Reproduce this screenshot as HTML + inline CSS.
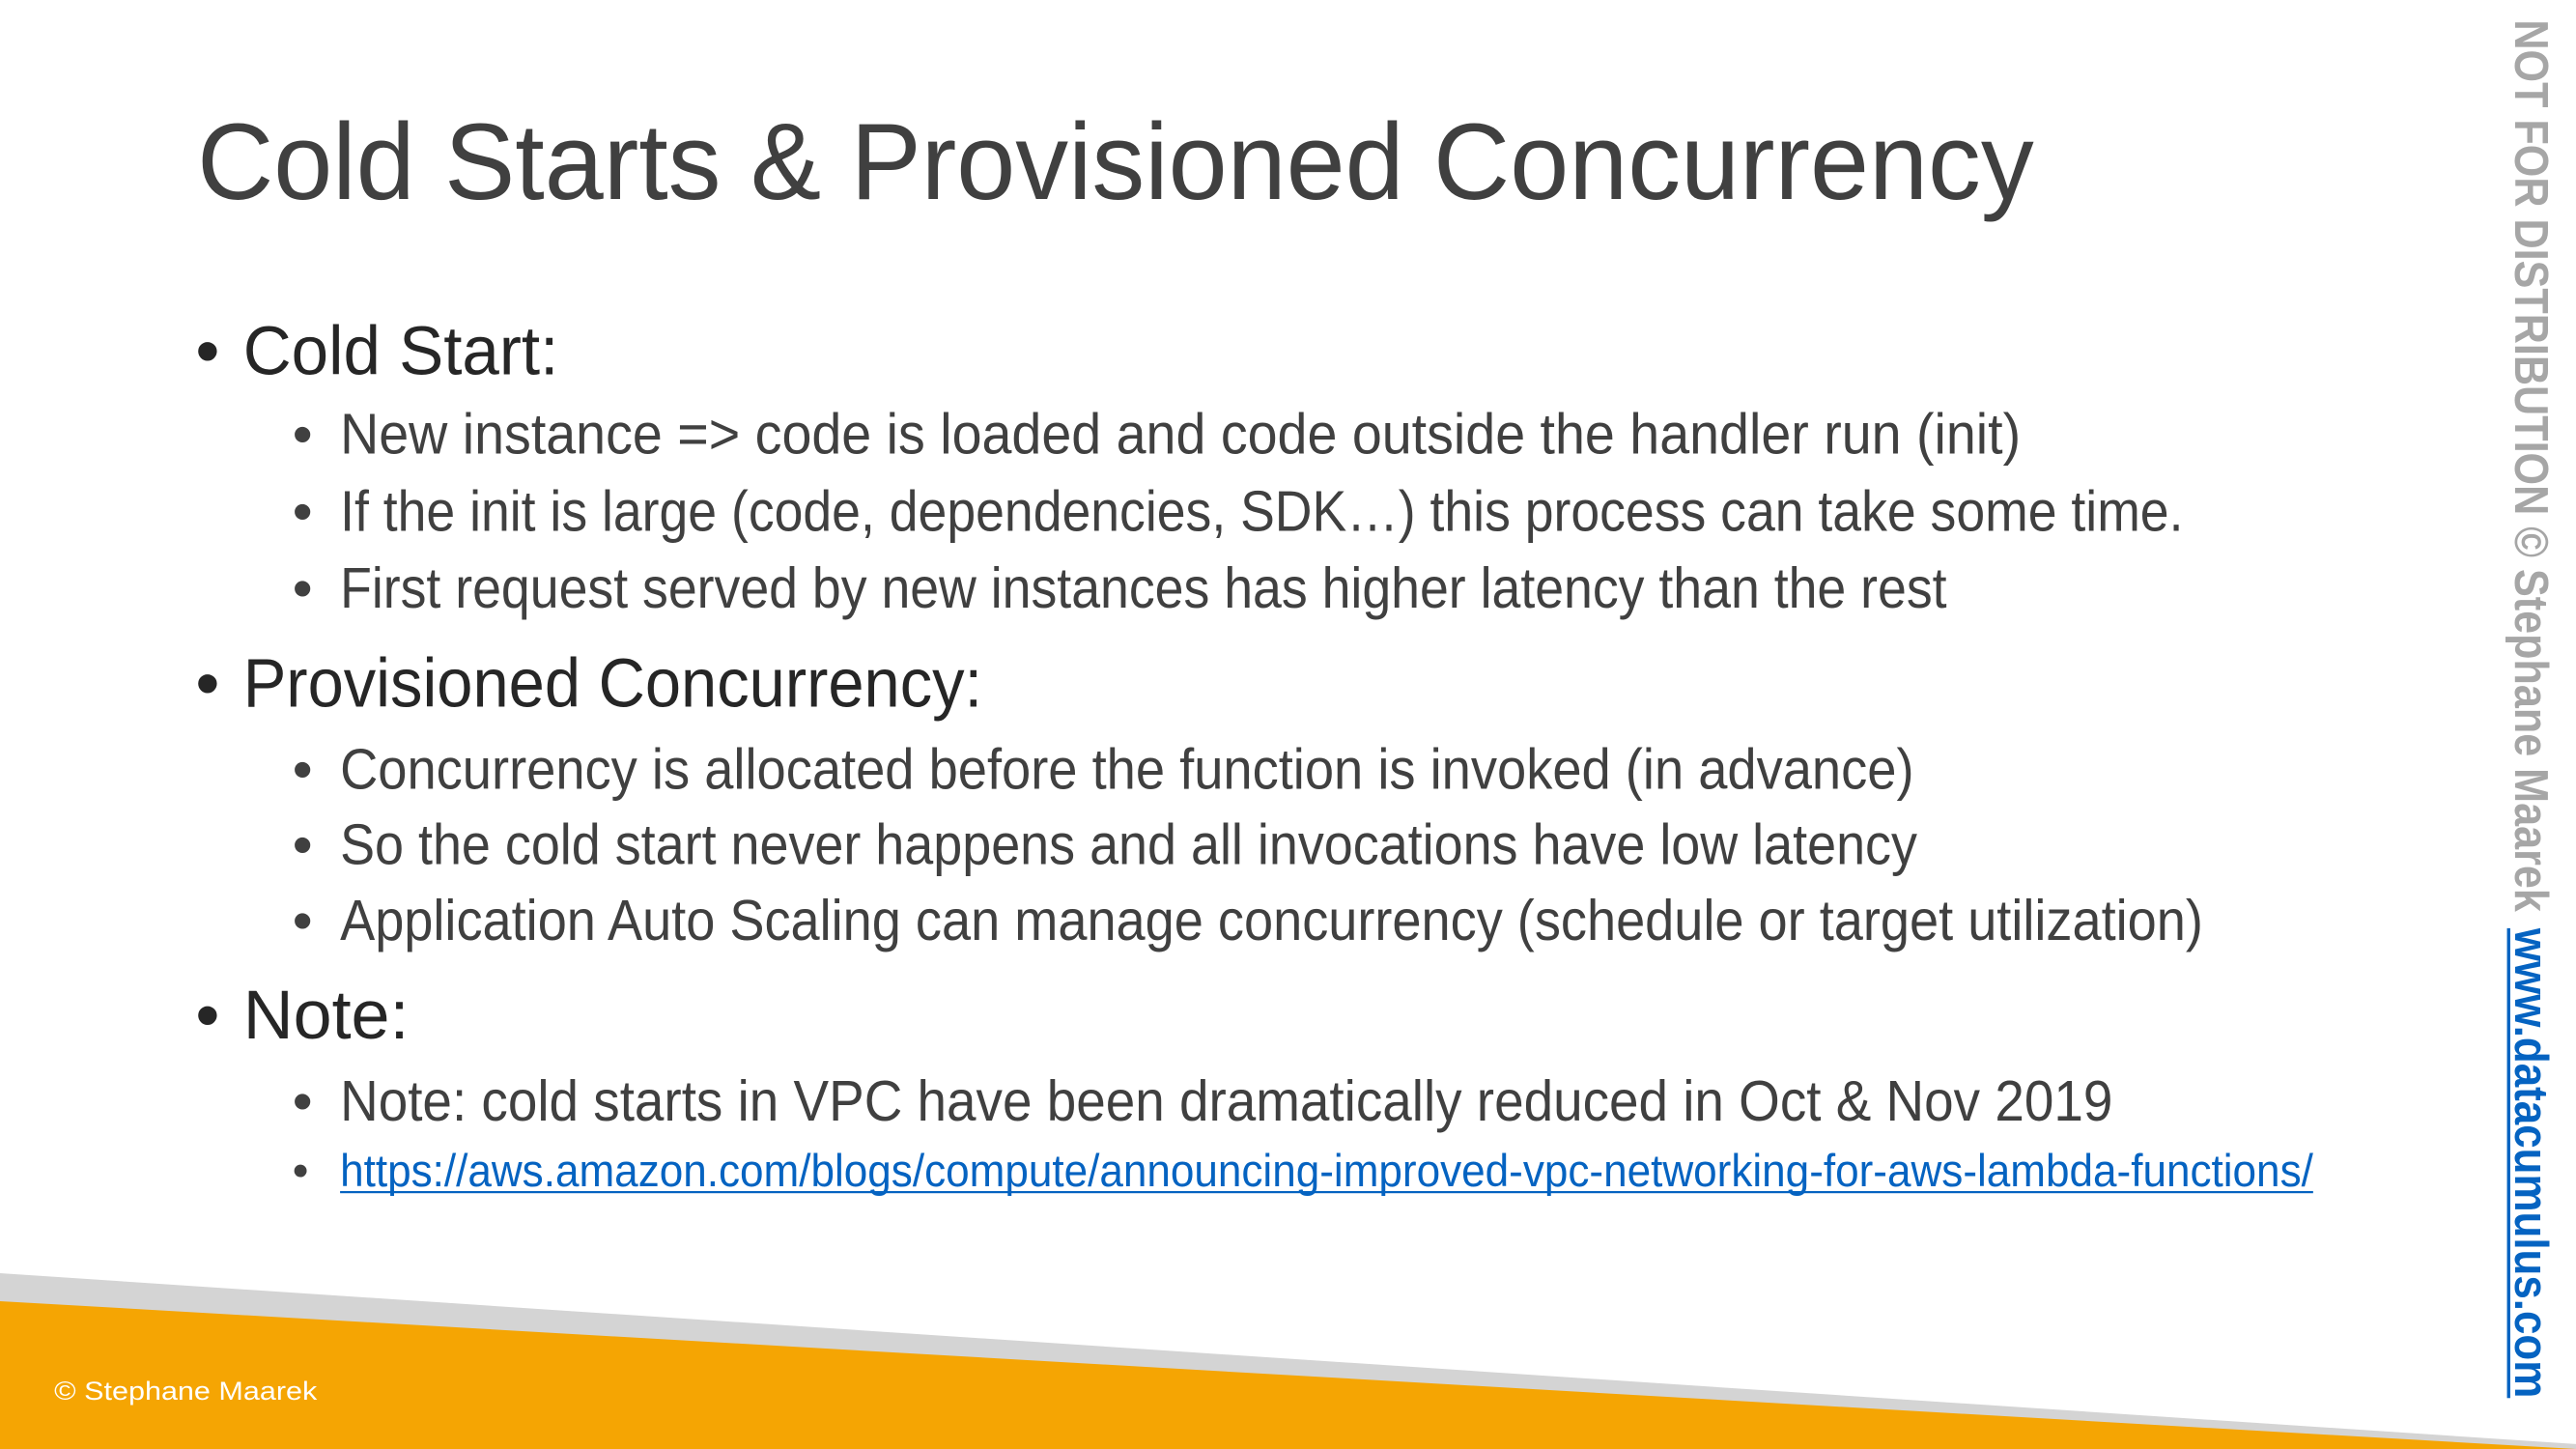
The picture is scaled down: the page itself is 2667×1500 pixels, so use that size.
<!DOCTYPE html>
<html><head><meta charset="utf-8"><style>
html,body{margin:0;padding:0;background:#fff;}
svg{display:block;}
text{font-family:"Liberation Sans",sans-serif;}
</style></head><body>
<svg width="2667" height="1500" viewBox="0 0 1568 882" preserveAspectRatio="none" xmlns="http://www.w3.org/2000/svg">
<rect width="1568" height="882" fill="#fff"/>
<polygon points="0,775 1568,879 1568,882 0,882" fill="#d4d4d4"/>
<polygon points="0,792 1568,882 0,882" fill="#f5a503"/>
<text x="33" y="852" font-size="16" fill="#fff" textLength="160" lengthAdjust="spacingAndGlyphs">© Stephane Maarek</text>

<text x="120" y="121" font-size="66" fill="#404040" textLength="1118" lengthAdjust="spacingAndGlyphs">Cold Starts &amp; Provisioned Concurrency</text>

<g fill="#262626" font-size="42">
<text x="119" y="228">•</text>
<text x="148" y="228" textLength="192" lengthAdjust="spacingAndGlyphs">Cold Start:</text>
<text x="119" y="430">•</text>
<text x="148" y="430" textLength="450" lengthAdjust="spacingAndGlyphs">Provisioned Concurrency:</text>
<text x="119" y="632">•</text>
<text x="148" y="632" textLength="101" lengthAdjust="spacingAndGlyphs">Note:</text>
</g>
<g fill="#404040" font-size="35">
<text x="178" y="276">•</text>
<text x="207" y="276" textLength="1023" lengthAdjust="spacingAndGlyphs">New instance =&gt; code is loaded and code outside the handler run (init)</text>
<text x="178" y="323">•</text>
<text x="207" y="323" textLength="1122" lengthAdjust="spacingAndGlyphs">If the init is large (code, dependencies, SDK…) this process can take some time.</text>
<text x="178" y="370">•</text>
<text x="207" y="370" textLength="978" lengthAdjust="spacingAndGlyphs">First request served by new instances has higher latency than the rest</text>
<text x="178" y="480">•</text>
<text x="207" y="480" textLength="958" lengthAdjust="spacingAndGlyphs">Concurrency is allocated before the function is invoked (in advance)</text>
<text x="178" y="526">•</text>
<text x="207" y="526" textLength="960" lengthAdjust="spacingAndGlyphs">So the cold start never happens and all invocations have low latency</text>
<text x="178" y="572">•</text>
<text x="207" y="572" textLength="1134" lengthAdjust="spacingAndGlyphs">Application Auto Scaling can manage concurrency (schedule or target utilization)</text>
<text x="178" y="682">•</text>
<text x="207" y="682" textLength="1079" lengthAdjust="spacingAndGlyphs">Note: cold starts in VPC have been dramatically reduced in Oct &amp; Nov 2019</text>
</g>
<text x="178" y="722" font-size="28" fill="#404040">•</text>
<text x="207" y="722" font-size="28" fill="#0563c1" textLength="1201" lengthAdjust="spacingAndGlyphs">https://aws.amazon.com/blogs/compute/announcing-improved-vpc-networking-for-aws-lambda-functions/</text>
<rect x="207" y="725" width="1201" height="1.3" fill="#0563c1"/>

<g transform="translate(1531,12) rotate(90)">
<text x="0" y="0" font-size="29" font-weight="bold" fill="#a6a6a6" textLength="543" lengthAdjust="spacingAndGlyphs">NOT FOR DISTRIBUTION © Stephane Maarek</text>
<text x="553" y="0" font-size="29" font-weight="bold" fill="#0563c1" textLength="286" lengthAdjust="spacingAndGlyphs">www.datacumulus.com</text>
<rect x="553" y="3" width="286" height="2" fill="#0563c1"/>
</g>
</svg>
</body></html>
